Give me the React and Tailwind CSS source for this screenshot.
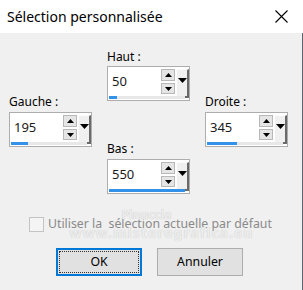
const font = { fontFamily: '"Noto Sans", "Open Sans", sans-serif' };

function Tri({ dir = 'up', w = 7, h = 4 }) {
  const d = dir === 'up' ? `M0 ${h} L${w / 2} 0 L${w} ${h} Z` : `M0 0 L${w} 0 L${w / 2} ${h} Z`;
  return (
    <svg width={w} height={h} viewBox={`0 0 ${w} ${h}`}>
      <path d={d} fill="#000" />
    </svg>
  );
}

function SpinField({ value, bar }) {
  return (
    <div className="relative w-[83px] h-[35px] bg-white border border-[#adadad]">
      <div className="flex h-full">
        <div className="flex-1 flex items-center pl-[4px] pb-[3px] text-[13px] text-[#1a1a1a]">{value}</div>
        <div className="flex flex-col gap-[2px] pt-[2px] w-[14px] mr-[1px]">
          <div className="h-[12px] bg-[#e5e5e5] border border-[#b8b8b8] flex items-center justify-center">
            <Tri dir="up" />
          </div>
          <div className="h-[11px] bg-[#e5e5e5] border border-[#b8b8b8] flex items-center justify-center">
            <Tri dir="down" />
          </div>
        </div>
        <div className="w-[13px] h-[29px] mt-[2px] bg-[#f0f0f0] border-l border-t border-[#fcfcfc] border-r-2 border-b-2 border-r-[#6a6a6a] border-b-[#6a6a6a] flex items-start justify-center pt-[8px]">
          <Tri dir="down" w={9} h={5} />
        </div>
      </div>
      <div className="absolute left-[1px] right-[4px] bottom-[1px] h-[3px] bg-[#e8e8e8]">
        <div className="h-full bg-[#3391e8]" style={{ width: bar }} />
      </div>
    </div>
  );
}

function Field({ label, value, bar, gap }) {
  return (
    <div className="flex flex-col">
      <div className="text-[12px] leading-[16px] text-black" style={{ marginBottom: gap }}>{label}</div>
      <SpinField value={value} bar={bar} />
    </div>
  );
}

export default function App() {
  return (
    <div className="w-[303px] h-[290px] bg-[#f0f0f0] relative overflow-hidden" style={font}>
      <div className="h-[33px] bg-white flex items-center justify-between pl-[7px] pr-[15px]">
        <span className="text-[14px] text-black pb-[1px]">Sélection personnalisée</span>
        <svg width="13" height="13" viewBox="0 0 13 13">
          <path d="M0.5 0.5 L12.5 12.5 M12.5 0.5 L0.5 12.5" stroke="#000" strokeWidth="1.1" />
        </svg>
      </div>
      <div className="border-r border-[#5c6670] h-[257px]">
        <div className="flex items-start pl-[9px] gap-[15px]">
          <div className="mt-[61px]">
            <Field label="Gauche :" value="195" bar={17} gap={2} />
          </div>
          <div className="mt-[16px] flex flex-col">
            <Field label="Haut :" value="50" bar={8} gap={1} />
            <div className="mt-[40px]">
              <Field label="Bas :" value="550" bar={76} gap={2} />
            </div>
          </div>
          <div className="mt-[61px]">
            <Field label="Droite :" value="345" bar={30} gap={2} />
          </div>
        </div>
        <div className="flex items-center mt-[21px] pl-[29px] gap-[4px] h-[18px]">
          <div className="w-[15px] h-[15px] border border-[#c4c4c4] bg-[#f4f4f4]" />
          <span className="text-[12.3px] text-[#8a8a8a] whitespace-pre">Utiliser la  sélection actuelle par défaut</span>
        </div>
        <div className="flex pl-[56px] gap-[15px] mt-[15px]">
          <button className="w-[86px] h-[28px] bg-[#e1e1e1] border-2 border-[#0078d7] p-[1px] text-[12.3px] text-black">
            <div className="w-full h-full border border-dotted border-[#333] flex items-center justify-center">OK</div>
          </button>
          <button className="w-[86px] h-[28px] bg-[#e1e1e1] border border-[#adadad] text-[12.3px] text-black flex items-center justify-center">
            Annuler
          </button>
        </div>
      </div>
      <div className="absolute left-0 right-0 top-[208px] flex flex-col items-center pointer-events-none select-none">
        <span className="text-[12px] font-bold text-[#ececec] leading-[14px] ml-[-10px]" style={{ textShadow: '0 0 1px #c0c0c0' }}>Pinuccia</span>
        <span className="text-[14px] font-bold tracking-[1px] text-[#ececec] leading-[16px] mt-[3px] ml-[20px]" style={{ textShadow: '0 0 1px #c0c0c0' }}>www.misteregrafica.eu</span>
      </div>
    </div>
  );
}
